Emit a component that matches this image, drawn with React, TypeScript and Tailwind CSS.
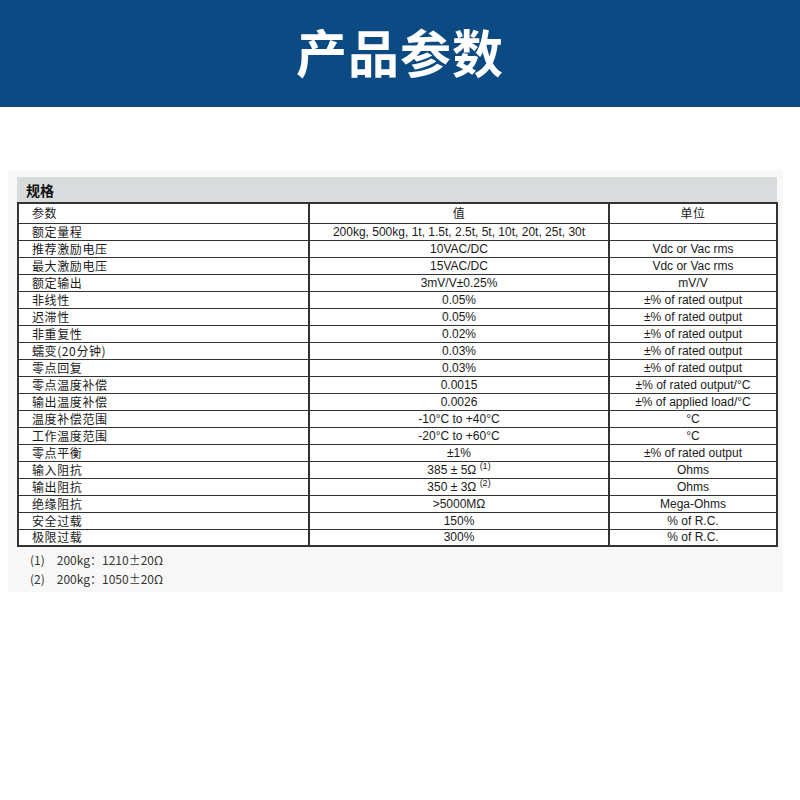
const rows: [string, React.ReactNode, string][] = [
  ["额定量程", "200kg, 500kg, 1t, 1.5t, 2.5t, 5t, 10t, 20t, 25t, 30t", ""],
  ["推荐激励电压", "10VAC/DC", "Vdc or Vac rms"],
  ["最大激励电压", "15VAC/DC", "Vdc or Vac rms"],
  ["额定输出", "3mV/V±0.25%", "mV/V"],
  ["非线性", "0.05%", "±% of rated output"],
  ["迟滞性", "0.05%", "±% of rated output"],
  ["非重复性", "0.02%", "±% of rated output"],
  ["蠕变(20分钟)", "0.03%", "±% of rated output"],
  ["零点回复", "0.03%", "±% of rated output"],
  ["零点温度补偿", "0.0015", "±% of rated output/°C"],
  ["输出温度补偿", "0.0026", "±% of applied load/°C"],
  ["温度补偿范围", "-10°C to +40°C", "°C"],
  ["工作温度范围", "-20°C to +60°C", "°C"],
  ["零点平衡", "±1%", "±% of rated output"],
  [
    "输入阻抗",
    <>
      385 ± 5Ω <sup className="text-[9px]">(1)</sup>
    </>,
    "Ohms",
  ],
  [
    "输出阻抗",
    <>
      350 ± 3Ω <sup className="text-[9px]">(2)</sup>
    </>,
    "Ohms",
  ],
  ["绝缘阻抗", ">5000MΩ", "Mega-Ohms"],
  ["安全过载", "150%", "% of R.C."],
  ["极限过载", "300%", "% of R.C."],
];

const latin = "font-['Liberation_Sans','Noto_Sans_CJK_SC',sans-serif] tracking-normal";

export default function App() {
  return (
    <div className="w-[800px] h-[800px] bg-white font-['Noto_Sans_CJK_SC',sans-serif]">
      <div className="h-[107px] bg-[#0b4a82] flex items-center justify-center">
        <h1 className="text-[51px] font-bold text-white tracking-[1px] leading-none pb-1">产品参数</h1>
      </div>

      <div className="mt-[63px] mx-[8px] w-[775px] h-[422px] bg-[#f8f8f8] pt-[7px] px-[9px]">
        <div className="h-[25px] bg-[#d9dcdc] flex items-center px-[9px] w-[760px]">
          <span className="text-[14px] font-bold text-[#111] leading-none">规格</span>
        </div>
        <table className="w-[759px] border-collapse border-2 border-[#333] bg-white text-[12px] tracking-[0.6px] text-[#1a1a1a] table-fixed">
          <colgroup>
            <col className="w-[291px]" />
            <col className="w-[300px]" />
            <col className="w-[168px]" />
          </colgroup>
          <tbody>
            <tr className="h-[20px]">
              <td className="border-y border-[#333] border-r-2 pl-[13px] leading-none">参数</td>
              <td className="border-y border-[#333] border-r-2 text-center leading-none">值</td>
              <td className="border-y border-[#333] text-center leading-none">单位</td>
            </tr>
            {rows.map(([name, value, unit], i) => (
              <tr key={i} className="h-[17px]">
                <td className="border-y border-[#333] border-r-2 pl-[13px] leading-none">{name}</td>
                <td className={`border-y border-[#333] border-r-2 text-center leading-none ${latin}`}>{value}</td>
                <td className={`border-y border-[#333] text-center leading-none ${latin}`}>{unit}</td>
              </tr>
            ))}
          </tbody>
        </table>
        <div className="pl-[13px] pt-[5px] text-[12px] text-[#333] font-['Noto_Sans_CJK_SC',monospace] space-y-[3px] leading-[16px]">
          <div>
            (1)<span className="inline-block w-[12px]" />200kg：1210±20Ω
          </div>
          <div>
            (2)<span className="inline-block w-[12px]" />200kg：1050±20Ω
          </div>
        </div>
      </div>
    </div>
  );
}
